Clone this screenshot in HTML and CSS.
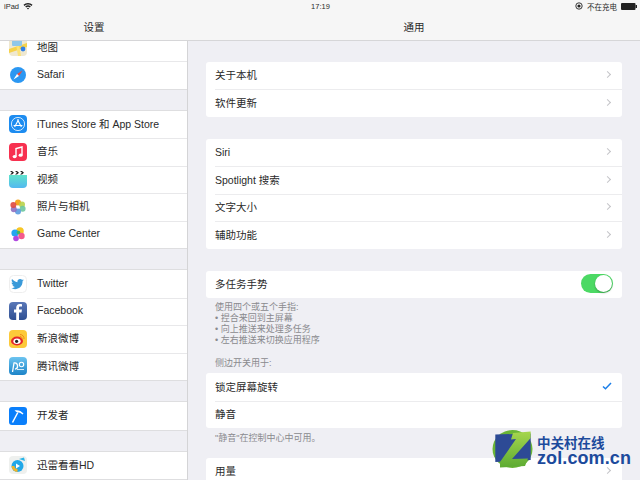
FILE: index.html
```html
<!DOCTYPE html>
<html>
<head>
  <meta charset="UTF-8">
  <title>通用</title>
  <link rel="stylesheet" href="styles.css">
</head>
<body>
  <div class="screen">
    <div class="topbar">
      <div class="status">
        <div class="status-left">
          <span>iPad</span>
          <svg width="10" height="8" viewBox="0 0 10 8"><path d="M0.5 2.8a6.4 6.4 0 0 1 9 0L8.5 3.9a5 5 0 0 0-7 0zM2.2 4.5a4 4 0 0 1 5.6 0L6.8 5.6a2.6 2.6 0 0 0-3.6 0zM3.9 6.2a1.6 1.6 0 0 1 2.2 0L5 7.500z" fill="#222"/></svg>
        </div>
        <span class="status-time">17:19</span>
        <div class="status-right">
          <svg width="8" height="8" viewBox="0 0 8 8"><circle cx="4" cy="4" r="3.200" fill="none" stroke="#222" stroke-width="0.900"/><circle cx="4" cy="4" r="1.600" fill="#222"/></svg>
          <span>不在充电</span>
          <svg class="battery" width="16" height="7" viewBox="0 0 16 7"><rect width="14.500" height="7" rx="1" fill="#222"/><rect x="14.500" y="2" width="1.500" height="3" fill="#222"/></svg>
        </div>
      </div>
      <div class="titles">
        <div class="title-side">设置</div>
        <div class="title-main">通用</div>
      </div>
    </div>

    <div class="panes">
      <div class="sidebar">
        <div class="side-group side-first">
          <div class="side-row">
            <svg class="icon" viewBox="0 0 18 18"><rect width="18" height="18" rx="4" fill="#efe8d0"/><path d="M0 11L18 5V9L0 15z" fill="#f6d24a"/><path d="M6 0L9 18H12L9 0z" fill="#fbe27a"/><rect x="3" y="2" width="10" height="6" rx="1" fill="#8fc7ea"/><circle cx="14" cy="11" r="2.400" fill="#2f80e8"/></svg>
            <span class="side-label">地图</span>
          </div>
          <div class="side-row">
            <svg class="icon" viewBox="0 0 18 18"><rect width="18" height="18" rx="4" fill="#fff"/><circle cx="9" cy="9" r="8" fill="#2b97f2"/><path d="M13.500 4.500L10 10 8 8z" fill="#f0483e"/><path d="M4.500 13.500L8 8 10 10z" fill="#fff"/></svg>
            <span class="side-label">Safari</span>
          </div>
        </div>

        <div class="side-group">
          <div class="side-row">
            <svg class="icon" viewBox="0 0 18 18"><rect width="18" height="18" rx="4" fill="#1d8cf0"/><circle cx="9" cy="9" r="6.600" fill="none" stroke="#fff" stroke-width="0.800"/><path d="M9.600 4.500L5.600 12M8.400 4.500l4 7.500M4.600 10.500h8.800" fill="none" stroke="#fff" stroke-width="1.100"/></svg>
            <span class="side-label">iTunes Store 和 App Store</span>
          </div>
          <div class="side-row">
            <svg class="icon" viewBox="0 0 18 18"><rect width="18" height="18" rx="4" fill="#f7304f"/><path d="M7 13.500V5.500L13 4V12" fill="none" stroke="#fff" stroke-width="1.400"/><ellipse cx="5.600" cy="13.600" rx="2" ry="1.600" fill="#fff"/><ellipse cx="11.600" cy="12.200" rx="2" ry="1.600" fill="#fff"/></svg>
            <span class="side-label">音乐</span>
          </div>
          <div class="side-row">
            <svg class="icon" viewBox="0 0 18 18"><defs><linearGradient id="clip" x1="0" y1="0" x2="0" y2="1"><stop offset="0" stop-color="#5fe3cc"/><stop offset="1" stop-color="#52b8f0"/></linearGradient></defs><path d="M0 5H18V14a4 4 0 0 1-4 4H4a4 4 0 0 1-4-4z" fill="url(#clip)"/><path d="M0 1H18V4.600H0z" fill="#fff"/><path d="M1 1L3 1 5 2.800 3 4.600 1 4.600 3 2.800zM6 1L8 1 10 2.800 8 4.600 6 4.600 8 2.800zM11 1L13 1 15 2.800 13 4.600 11 4.600 13 2.800z" fill="#222"/></svg>
            <span class="side-label">视频</span>
          </div>
          <div class="side-row">
            <svg class="icon" viewBox="0 0 18 18"><rect width="18" height="18" rx="4" fill="#fff"/><circle cx="9" cy="4.600" r="3" fill="#f5a623"/><circle cx="13" cy="6.600" r="3" fill="#b8d14a" opacity=".9"/><circle cx="13.600" cy="10.800" r="3" fill="#6cc6a0" opacity=".9"/><circle cx="9" cy="13.400" r="3" fill="#5a9ae0" opacity=".9"/><circle cx="4.800" cy="11.200" r="3" fill="#8f6fc0" opacity=".9"/><circle cx="4.400" cy="7" r="3" fill="#e0483e" opacity=".9"/></svg>
            <span class="side-label">照片与相机</span>
          </div>
          <div class="side-row">
            <svg class="icon" viewBox="0 0 18 18"><rect width="18" height="18" rx="4" fill="#fff"/><circle cx="11" cy="6" r="3.800" fill="#f7c625"/><circle cx="6" cy="8" r="3.600" fill="#23a6f0"/><circle cx="12.500" cy="11" r="3.200" fill="#f45a8c"/><circle cx="7" cy="13.500" r="2.800" fill="#b048e0"/><circle cx="9.500" cy="7.500" r="1.800" fill="#3fb56a"/></svg>
            <span class="side-label">Game Center</span>
          </div>
        </div>

        <div class="side-group">
          <div class="side-row">
            <svg class="icon" viewBox="0 0 18 18"><rect x=".5" y=".5" width="17" height="17" rx="4" fill="#fff" stroke="#eee"/><path d="M15 5.200c-.5.2-1 .4-1.500.4.500-.3 1-.8 1.200-1.400-.5.300-1.100.500-1.700.600a2.700 2.700 0 0 0-4.600 2.400C6.200 6.700 4.300 5.700 3 4.100c-.7 1.200-.3 2.800.8 3.600-.4 0-.8-.1-1.200-.3 0 1.300.9 2.400 2.100 2.700-.4.100-.8.100-1.200 0 .3 1.100 1.300 1.800 2.500 1.900-1.100.900-2.500 1.300-3.900 1.100 3.900 2.500 11.500.9 11.500-7 .6-.2 1-.5 1.400-.9z" fill="#3a9ad9"/></svg>
            <span class="side-label">Twitter</span>
          </div>
          <div class="side-row">
            <svg class="icon" viewBox="0 0 18 18"><defs><linearGradient id="fb" x1="0" y1="0" x2="0" y2="1"><stop offset="0" stop-color="#5a78b8"/><stop offset="1" stop-color="#2f4f92"/></linearGradient></defs><rect width="18" height="18" rx="4" fill="url(#fb)"/><path d="M10 18V10.500H12.500L13 7.600H10V6c0-.9.400-1.400 1.400-1.400H13V2.200C12.500 2.100 11.700 2 10.800 2 8.600 2 7.200 3.400 7.200 5.700V7.600H5V10.500H7.200V18z" fill="#fff"/></svg>
            <span class="side-label">Facebook</span>
          </div>
          <div class="side-row">
            <svg class="icon" viewBox="0 0 18 18"><rect width="18" height="18" rx="4" fill="#fcc93a"/><ellipse cx="8" cy="11" rx="6" ry="4.400" fill="#e5262a"/><ellipse cx="8" cy="11.200" rx="3.600" ry="2.700" fill="#fff"/><circle cx="7.600" cy="11.300" r="1.600" fill="#222"/><path d="M11 4.500a4 4 0 0 1 4 4.500M11 6.500a2 2 0 0 1 2 2.500" fill="none" stroke="#ef8a1d" stroke-width="1"/></svg>
            <span class="side-label">新浪微博</span>
          </div>
          <div class="side-row">
            <svg class="icon" viewBox="0 0 18 18"><defs><linearGradient id="qq" x1="0" y1="0" x2="0" y2="1"><stop offset="0" stop-color="#6cc4f0"/><stop offset="1" stop-color="#1c84c8"/></linearGradient></defs><rect width="18" height="18" rx="4" fill="url(#qq)"/><path d="M3.500 15L5 6a3 3 0 1 1 1 6" fill="none" stroke="#fff" stroke-width="1.300"/><circle cx="12.500" cy="7.500" r="2.200" fill="none" stroke="#fff" stroke-width="1.100"/><path d="M8 12.500h7" stroke="#fff" stroke-width=".8"/></svg>
            <span class="side-label">腾讯微博</span>
          </div>
        </div>

        <div class="side-group">
          <div class="side-row">
            <svg class="icon" viewBox="0 0 18 18"><rect width="18" height="18" rx="3" fill="#0a7ffb"/><path d="M3.500 15.500L8.800 5.500" stroke="#fff" stroke-width="1.500" fill="none"/><path d="M5.500 3.500C8.500 2.500 12 3.500 14.500 6.500L13.500 7.500C11.500 5.800 9.500 5 7.800 5.200z" fill="#fff"/></svg>
            <span class="side-label">开发者</span>
          </div>
        </div>

        <div class="side-group">
          <div class="side-row">
            <svg class="icon" viewBox="0 0 18 18"><rect width="18" height="18" rx="4" fill="#eef0ee"/><circle cx="8.500" cy="10" r="6" fill="#22a8e8"/><path d="M8.500 16a6 6 0 0 1-6-6h3a3 3 0 0 0 3 3z" fill="#f0b52a"/><path d="M7 7.500l4 2.500-4 2.500z" fill="#fff"/><path d="M10 3L15 1.500 16 5z" fill="#28b4e8"/></svg>
            <span class="side-label">迅雷看看HD</span>
          </div>
        </div>
      </div>

      <div class="main">
        <div class="group">
          <div class="row"><span>关于本机</span><span class="chevron"></span></div>
          <div class="row"><span>软件更新</span><span class="chevron"></span></div>
        </div>

        <div class="group">
          <div class="row"><span>Siri</span><span class="chevron"></span></div>
          <div class="row"><span>Spotlight 搜索</span><span class="chevron"></span></div>
          <div class="row"><span>文字大小</span><span class="chevron"></span></div>
          <div class="row"><span>辅助功能</span><span class="chevron"></span></div>
        </div>

        <div class="group">
          <div class="row"><span>多任务手势</span><span class="switch"><span class="knob"></span></span></div>
        </div>
        <div class="note">
          使用四个或五个手指:<br>
          • 捏合来回到主屏幕<br>
          • 向上推送来处理多任务<br>
          • 左右推送来切换应用程序
        </div>
        <div class="note note-head">侧边开关用于:</div>

        <div class="group group-tight">
          <div class="row"><span>锁定屏幕旋转</span>
            <svg class="check" width="10" height="8" viewBox="0 0 10 8"><path d="M1 4.500L3.500 6.800 9 1" fill="none" stroke="#1a7ee8" stroke-width="1.500"/></svg>
          </div>
          <div class="row"><span>静音</span></div>
        </div>
        <div class="note note-after">"静音"在控制中心中可用。</div>

        <div class="group">
          <div class="row"><span>用量</span><span class="chevron"></span></div>
        </div>
      </div>
    </div>

    <div class="watermark">
      <svg width="41" height="39" viewBox="0 0 41 39">
        <defs><linearGradient id="zol" x1="0" y1="0" x2="0" y2="1"><stop offset="0" stop-color="#a6d64e"/><stop offset="1" stop-color="#5cab32"/></linearGradient></defs>
        <ellipse cx="20.500" cy="19" rx="20" ry="19" fill="#6ab536"/>
        <path d="M3.300 4.500L38.700 3.500V30L3.300 32z" fill="#2d4a95"/>
        <path d="M21 3L38.700 1.500V8L20 29 36 28.500 33 36 8 37.500V32L24 9 19 9.500z" fill="url(#zol)"/>
      </svg>
      <div class="wm-text">
        <div class="wm-cn">中关村在线</div>
        <div class="wm-en">zol.com.cn</div>
      </div>
    </div>
  </div>
</body>
</html>
```

FILE: styles.css
```css
* {
  box-sizing: border-box;
}
html, body {
  margin: 0;
  padding: 0;
}
body {
  font-family: 'Liberation Sans', 'Noto Sans CJK SC', sans-serif;
  color: #2a2a2a;
  background-color: #efeff4;
}
.screen {
  position: relative;
  width: 640px;
  height: 480px;
  overflow: hidden;
  display: flex;
  flex-direction: column;
}
.topbar {
  flex: none;
  height: 41px;
  background-color: #f6f6f6;
  border-bottom: 1px solid #d6d6d8;
}
.status {
  height: 12px;
  padding: 0 3px 0 4px;
  display: grid;
  grid-template-columns: 1fr auto 1fr;
  align-items: center;
  font-size: 7.5px;
}
.status-left {
  display: flex;
  align-items: center;
  gap: 4px;
}
.status-right {
  display: flex;
  align-items: center;
  justify-content: flex-end;
  gap: 4px;
}
.titles {
  display: flex;
  height: 28px;
  font-size: 10.5px;
}
.title-side, .title-main {
  display: flex;
  align-items: center;
  justify-content: center;
}
.title-side {
  width: 188px;
}
.title-main {
  flex: 1;
}
.panes {
  flex: 1;
  display: flex;
  min-height: 0;
}
.sidebar {
  flex: none;
  width: 188px;
  overflow: hidden;
  border-right: 1px solid #d4d4d6;
  font-size: 10.5px;
}
.side-group {
  background-color: #fff;
  margin-bottom: 20px;
  border-top: 1px solid #dedee0;
  border-bottom: 1px solid #dedee0;
}
.side-first {
  margin-top: -7.5px;
  border-top: none;
}
.side-row {
  position: relative;
  height: 27.5px;
  padding: 0 0 2px 9px;
  display: flex;
  align-items: center;
  gap: 10px;
}
.side-row .icon {
  margin-top: 2px;
}
.side-row + .side-row::before {
  content: "";
  position: absolute;
  top: 0;
  left: 37px;
  right: 0;
  border-top: 1px solid #e8e8ea;
}
.icon {
  flex: none;
  width: 18px;
  height: 18px;
}
.main {
  flex: 1;
  padding: 20.5px 18px 0;
  font-size: 10.5px;
}
.group {
  background-color: #fff;
  border-radius: 3px;
  margin-bottom: 22px;
}
.group-tight {
  margin-bottom: 0;
}
.row {
  position: relative;
  height: 27.5px;
  padding: 0 10px 1px 9px;
  display: flex;
  align-items: center;
  justify-content: space-between;
}
.row + .row::before {
  content: "";
  position: absolute;
  top: 0;
  left: 9px;
  right: 0;
  border-top: 1px solid #ececee;
}
.chevron {
  width: 5px;
  height: 5px;
  margin-right: 2px;
  border-top: 1px solid #c4c4c8;
  border-right: 1px solid #c4c4c8;
  transform: rotate(45deg);
}
.switch {
  display: flex;
  justify-content: flex-end;
  width: 32px;
  height: 19px;
  margin-right: -1px;
  padding: 1px;
  background-color: #4cd964;
  border-radius: 10px;
}
.knob {
  width: 17px;
  height: 17px;
  background-color: #fff;
  border-radius: 50%;
  box-shadow: 0 1px 2px rgba(0,0,0,0.3);
}
.note {
  margin-top: -18.5px;
  padding-left: 9px;
  font-size: 9px;
  line-height: 11px;
  color: #8a8a8e;
}
.note-head {
  margin-top: 12px;
  margin-bottom: 4.5px;
}
.note-after {
  margin-top: 4.5px;
  margin-bottom: 14px;
}
.watermark {
  position: absolute;
  left: 492px;
  top: 430px;
  display: flex;
  gap: 4px;
  color: #1c4a9c;
  font-weight: bold;
}
.wm-text {
  padding-top: 6px;
}
.wm-cn {
  font-size: 13.5px;
  line-height: 15px;
}
.wm-en {
  font-size: 18px;
  line-height: 15px;
  letter-spacing: 0.1px;
}
```
